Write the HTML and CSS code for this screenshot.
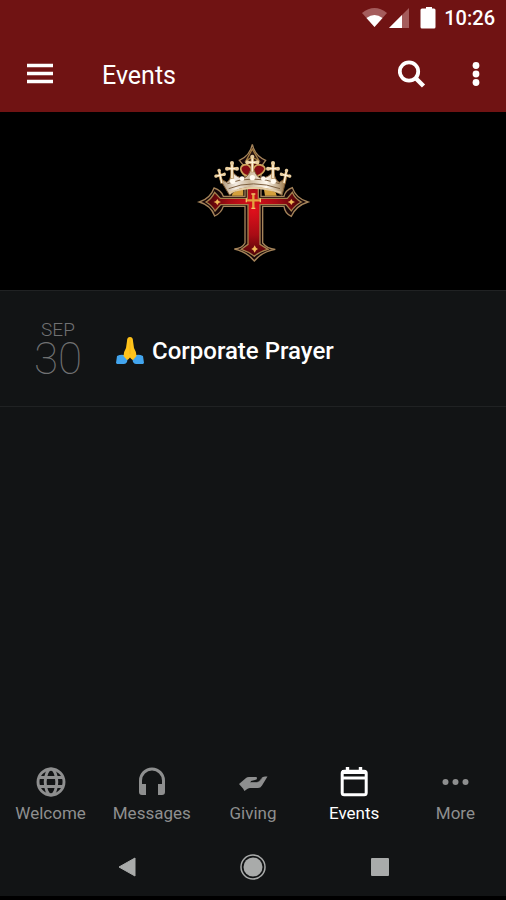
FILE: index.html
```html
<!DOCTYPE html>
<html lang="en">
<head>
<meta charset="utf-8">
<meta name="viewport" content="width=device-width, initial-scale=1">
<title>Events</title>
<link rel="stylesheet" href="styles.css">
</head>
<body>
<header class="header">
  <div class="status">
    <svg class="signals" width="76" height="24" viewBox="0 0 76 24" aria-hidden="true">
      <path d="M0 7Q12.500-3 25 7L12.500 21Z" fill="#a45c5c"/>
      <path d="M4.500 12Q12.500 6 20.500 12L12.500 21Z" fill="#fff"/>
      <path d="M47 2V22H27Z" fill="#a45c5c"/>
      <path d="M40 9V22H27Z" fill="#fff"/>
      <path d="M62 2.500h2V1h6v1.500h2q1.500 0 1.500 1.500V21q0 1.500-1.500 1.500H60Q58.500 22.500 58.500 21V4Q58.500 2.500 60 2.500Z" fill="#fff"/>
    </svg>
    <time class="clock">10:26</time>
  </div>
  <div class="toolbar">
    <button class="icon-button" type="button" aria-label="Menu">
      <svg width="28" height="28" viewBox="0 0 28 28"><path d="M1 5.500h26M1 13.500h26M1 21.500h26" stroke="#fff" stroke-width="3.600"/></svg>
    </button>
    <h1 class="title">Events</h1>
    <button class="icon-button" type="button" aria-label="Search">
      <svg width="28" height="28" viewBox="0 0 28 28" fill="none" stroke="#fff"><circle cx="11" cy="11.500" r="9.200" stroke-width="3.800"/><path d="M17.500 18L25.500 26" stroke-width="4.400"/></svg>
    </button>
    <button class="icon-button" type="button" aria-label="More options">
      <svg width="28" height="28" viewBox="0 0 28 28" fill="#fff"><circle cx="14" cy="5.500" r="3.400"/><circle cx="14" cy="14" r="3.400"/><circle cx="14" cy="22.500" r="3.400"/></svg>
    </button>
  </div>
</header>
<main class="main">
  <div class="banner">
    <svg width="130" height="135" viewBox="-6 0 390 405" role="img" aria-label="Crowned cross">
      <defs>
        <radialGradient id="red" gradientUnits="userSpaceOnUse" cx="190" cy="225" r="150">
          <stop offset="0" stop-color="#e0101c"/><stop offset=".5" stop-color="#a80c14"/><stop offset="1" stop-color="#3c0306"/>
        </radialGradient>
        <linearGradient id="metal" x1="0" x2="1" y1="0" y2="0">
          <stop offset="0" stop-color="#a08563"/><stop offset=".25" stop-color="#f4ece2"/><stop offset=".45" stop-color="#cdb99c"/><stop offset=".7" stop-color="#fff9ee"/><stop offset="1" stop-color="#94703f"/>
        </linearGradient>
        <g id="finial">
          <path d="M0-22V26M-15-4H15" stroke="#b98f54" stroke-width="10"/>
          <path d="M0-20V24M-13-4H13" stroke="#fff2d8" stroke-width="5"/>
          <circle cy="-21" r="6"/><circle cx="-15" cy="-4" r="6"/><circle cx="15" cy="-4" r="6"/>
        </g>
      </defs>
      <path d="M187 28Q194 62 227 76L213 96V184H282Q286 166 307 158Q317 190 354 201Q318 212 304 244Q285 236 282 214H218V324Q232 342 256 343Q215 350 193 378Q170 350 133 342Q156 340 165 324V214H100Q94 234 74 243Q62 210 28 201Q62 190 72 159Q94 166 100 184H165V96L148 76Q180 62 187 28Z" fill="#160608" stroke="#a5845a" stroke-width="4"/>
      <path d="M172 85H205V190H292L307 172Q315 192 334 201Q316 210 304 228L288 209H210V328L234 343Q208 350 193 364Q176 350 154 343L174 328V209H92L75 228Q65 210 48 201Q64 192 74 172L91 190H172Z" fill="url(#red)" stroke="#a5814d" stroke-width="4"/>
      <path d="M187 42L207 77L187 67L168 77Z" fill="#2a1610" stroke="#a57d43" stroke-width="4"/>
      <path d="M133 162L160 164V182H125ZM222 164L254 162L260 182H225Z" fill="#d4a03c"/>
      <path d="M152 102Q153 88 172 89Q184 94 187 114Q190 94 202 89Q223 89 225 102Q219 119 198 124H176Q155 120 152 102Z" fill="#870a13" stroke="#cda35b" stroke-width="5"/>
      <path d="M87 128L110 142Q121 138 126 108Q140 130 163 129Q179 122 187 88Q195 122 210 129Q235 131 250 108Q255 136 268 142L290 128L276 181Q234 154 188 160Q145 154 119 181Z" fill="url(#metal)" stroke="#805b32" stroke-width="3"/>
      <path d="M112 146Q187 118 269 146M116 161Q188 132 270 161" fill="none" stroke="#7e6040" stroke-width="3"/>
      <path d="M118 173Q188 145 272 173" fill="none" stroke="#e5cca2" stroke-width="6"/>
      <g fill="#e9cfa0">
        <use href="#finial" x="187" y="86"/><use href="#finial" x="126" y="105"/><use href="#finial" x="249" y="105"/>
        <use href="#finial" transform="translate(91 124) rotate(-12) scale(.85)"/><use href="#finial" transform="translate(286 124) rotate(12) scale(.85)"/>
      </g>
      <g fill="#fffaf0"><circle cx="128" cy="139" r="8"/><circle cx="156" cy="131" r="7"/><circle cx="187" cy="128" r="8"/><circle cx="220" cy="131" r="7"/><circle cx="250" cy="139" r="8"/></g>
      <path d="M190 178V219M170 196H210" stroke="#e3a13e" stroke-width="7"/>
      <path d="M184 177h12M184 220h12M169 190v12M211 190v12" stroke="#f3c56a" stroke-width="4"/>
      <path d="M82 192l4 6 7 3-7 3-4 6-4-6-7-3 7-3ZM304 192l4 6 7 3-7 3-4 6-4-6-7-3 7-3ZM194 331l4 7 6 4-6 4-4 7-4-7-6-4 6-4Z" fill="#f1b957"/>
    </svg>
  </div>
  <article class="event">
    <time class="date" datetime="09-30"><span class="month">SEP</span><span class="day">30</span></time>
    <h2 class="event-title">
      <svg width="28" height="28" viewBox="0 0 28 28" role="img" aria-label="Folded hands">
        <path d="M1 19Q7 16 12 20L11 25Q10 27 8 27H1L0 26ZM27 19Q21 16 16 20L17 25Q18 27 20 27H27L28 26Z" fill="#42a5ee"/>
        <path d="M14 0Q17 0 17 4L18 11Q20.500 15 20.500 19L17 23Q15 22 14 20.500Q13 22 11 23L7.500 19Q7.500 15 10 11L11 4Q11 0 14 0Z" fill="#ffc31b"/>
        <path d="M14 1V17" stroke="#f5b315"/>
      </svg>
      <span>Corporate Prayer</span>
    </h2>
  </article>
</main>
<nav class="tabs" aria-label="Sections">
  <a class="tab" href="#welcome">
    <svg width="30" height="30" viewBox="0 0 30 30" fill="none" stroke="currentColor" stroke-width="2.900"><circle cx="15" cy="15" r="13"/><ellipse cx="15" cy="15" rx="5.800" ry="13"/><path d="M3 10.500H27M3 19.500H27"/></svg>
    <span>Welcome</span>
  </a>
  <a class="tab" href="#messages">
    <svg width="30" height="30" viewBox="0 0 30 30" fill="none" stroke="currentColor"><path d="M3.500 20V13.500a11.500 11.500 0 0 1 23 0V20" stroke-width="3"/><path d="M2 17H9V28H5Q2 28 2 25ZM21 17H28V25Q28 28 25 28H21Z" fill="currentColor" stroke="none"/></svg>
    <span>Messages</span>
  </a>
  <a class="tab" href="#giving">
    <svg width="30" height="30" viewBox="0 0 30 30" fill="currentColor"><path d="M1 17L8 11Q9 10 11 10H18Q19 10 19 11.200L18.500 12.500L13 14V15H19Q21.500 14.500 23.500 11Q24.500 9.500 27 9.500H29.500L24 18.500Q22.500 21 20 21H12Q10 21 6.500 24L5 21.500Z"/><path d="M12 15H19Q22 14.500 24 11" fill="none" stroke="#121415" stroke-opacity=".5" stroke-width=".8"/></svg>
    <span>Giving</span>
  </a>
  <a class="tab tab-active" href="#events" aria-current="page">
    <svg width="30" height="30" viewBox="0 0 30 30" fill="none" stroke="currentColor"><rect x="3.200" y="4.200" width="24" height="23.600" rx="2" stroke-width="3"/><path d="M3 5H27" stroke-width="4"/><path d="M3 11H27" stroke-width="3"/><path d="M8.500 0V5M21.500 0V5" stroke-width="3.400"/></svg>
    <span>Events</span>
  </a>
  <a class="tab" href="#more">
    <svg width="30" height="30" viewBox="0 0 30 30" fill="currentColor"><circle cx="5.500" cy="15" r="3"/><circle cx="15.500" cy="15" r="3"/><circle cx="25.500" cy="15" r="3"/></svg>
    <span>More</span>
  </a>
</nav>
<div class="system">
  <button class="system-button" type="button" aria-label="Back"><svg width="28" height="28" viewBox="0 0 28 28"><path d="M6 14L22 5V23Z" fill="#a9abaa" stroke="#a9abaa" stroke-linejoin="round"/></svg></button>
  <button class="system-button" type="button" aria-label="Home"><svg width="28" height="28" viewBox="0 0 28 28"><circle cx="14" cy="14" r="12" fill="none" stroke="#a9abaa" stroke-width="1.500"/><circle cx="14" cy="14" r="9.500" fill="#a9abaa"/></svg></button>
  <button class="system-button" type="button" aria-label="Recent apps"><svg width="28" height="28" viewBox="0 0 28 28"><rect x="5" y="5" width="18" height="18" rx="1" fill="#a9abaa"/></svg></button>
</div>
</body>
</html>
```
FILE: styles.css
```css
* {
  box-sizing: border-box;
}

body {
  display: flex;
  flex-direction: column;
  min-height: 100vh;
  margin: 0;
  background: #121415;
  color: #fff;
  font-family: Roboto, sans-serif;
}

svg {
  display: block;
  flex: none;
}

button {
  padding: 0;
  border: 0;
  background: none;
}

.header {
  background: #701313;
}

.status {
  display: flex;
  align-items: center;
  justify-content: flex-end;
  gap: 6px;
  height: 36px;
  padding-right: 11px;
}

.clock {
  font-size: 20px;
  font-weight: 500;
  line-height: 24px;
}

.toolbar {
  display: flex;
  align-items: center;
  height: 76px;
  padding: 0 16px 0 26px;
}

.title {
  flex: 1;
  margin: 0 0 0 48px;
  padding-top: 3px;
  font-size: 25px;
  font-weight: 400;
  line-height: 32px;
}

.icon-button + .icon-button {
  margin-left: 36px;
}

.main {
  flex: 1;
}

.banner {
  display: flex;
  justify-content: center;
  padding: 23px 0 20px;
  background: #000;
}

.event {
  display: flex;
  align-items: center;
  height: 117px;
  padding-top: 4px;
  border: solid #202223;
  border-width: 1px 0;
}

.date {
  width: 116px;
  color: #707172;
  text-align: center;
}

.month,
.day {
  display: block;
}

.month {
  font-size: 19px;
  font-weight: 300;
  line-height: 16px;
}

.day {
  font-size: 44px;
  font-weight: 100;
  line-height: 42px;
}

.event-title {
  display: flex;
  align-items: center;
  gap: 8px;
  margin: 0;
  font-size: 24px;
  font-weight: 500;
  line-height: 32px;
}

.tabs {
  display: grid;
  grid-template-columns: repeat(5, 1fr);
  height: 70px;
}

.tab {
  display: flex;
  flex-direction: column;
  align-items: center;
  gap: 6px;
  color: #8e8f8f;
  font-size: 17px;
  line-height: 20px;
  text-decoration: none;
}

.tab-active {
  color: #fff;
}

.system {
  display: grid;
  grid-template-columns: repeat(3, 25%);
  justify-content: center;
  height: 63px;
  border-bottom: 4px solid #000;
}

.system-button {
  display: grid;
  place-items: center;
}
```
